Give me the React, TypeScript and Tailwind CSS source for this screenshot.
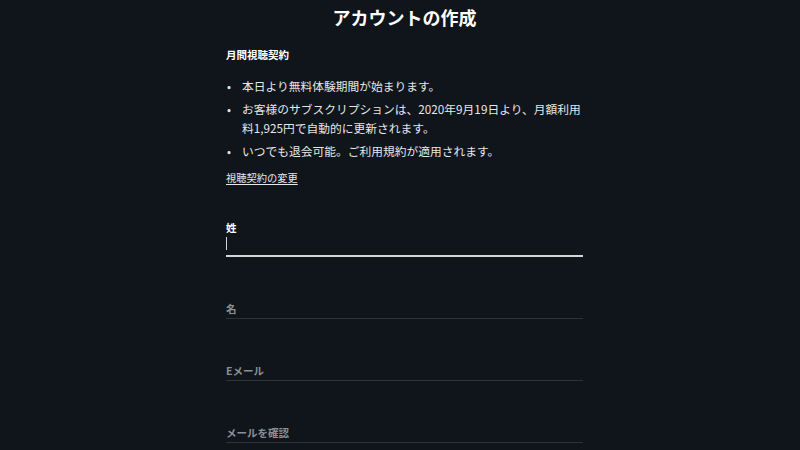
const bullets = [
  '本日より無料体験期間が始まります。',
  'お客様のサブスクリプションは、2020年9月19日より、月額利用料1,925円で自動的に更新されます。',
  'いつでも退会可能。ご利用規約が適用されます。',
];

function Field({ label, active = false }: { label: string; active?: boolean }) {
  if (active) {
    return (
      <div className="pt-[34px]">
        <div className="text-[10.5px] font-bold leading-[16px] text-white">{label}</div>
        <div className="h-[21px] border-b-2 border-[#d4d6d8] pt-[1px]">
          <div className="h-[13px] w-px bg-[#cfd2d4]" />
        </div>
      </div>
    );
  }
  return (
    <div className="mt-[43px] flex h-[19px] items-center border-b border-[#2c333a]">
      <span className="text-[10.5px] font-bold text-[#8a9096]">{label}</span>
    </div>
  );
}

export default function App() {
  return (
    <div
      className="h-[450px] w-[800px] overflow-hidden bg-[#0f151b] text-[#e6e7e8]"
      style={{ fontFamily: '"Noto Sans CJK JP", "Noto Sans", sans-serif' }}
    >
      <h1 className="pl-[9px] pt-[5px] text-center text-[18px] font-bold leading-[24px] text-white">
        アカウントの作成
      </h1>
      <div className="ml-[226px] w-[357px]">
        <h2 className="mt-[18px] text-[10.5px] font-bold leading-[16px] text-white">月間視聴契約</h2>
        <ul className="mt-[13px] flex flex-col gap-[4px] text-[11.75px] leading-[19px]">
          {bullets.map((b) => (
            <li key={b} className="flex">
              <span className="w-[16px] shrink-0 pl-[1px]">•</span>
              <span>{b}</span>
            </li>
          ))}
        </ul>
        <a className="mt-[10px] block text-[10.25px] leading-[16px] text-[#e6e7e8] underline underline-offset-2">
          視聴契約の変更
        </a>
        <Field label="姓" active />
        <Field label="名" />
        <Field label="Eメール" />
        <Field label="メールを確認" />
      </div>
    </div>
  );
}
